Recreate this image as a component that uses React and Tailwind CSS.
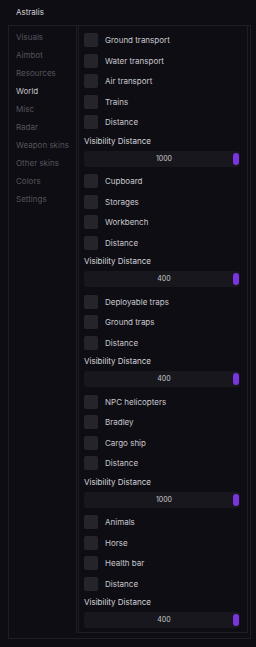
import React from "react";

const sections = [
  { items: ["Ground transport", "Water transport", "Air transport", "Trains", "Distance"], value: "1000" },
  { items: ["Cupboard", "Storages", "Workbench", "Distance"], value: "400" },
  { items: ["Deployable traps", "Ground traps", "Distance"], value: "400" },
  { items: ["NPC helicopters", "Bradley", "Cargo ship", "Distance"], value: "1000" },
  { items: ["Animals", "Horse", "Health bar", "Distance"], value: "400" },
];

const nav = ["Visuals", "Aimbot", "Resources", "World", "Misc", "Radar", "Weapon skins", "Other skins", "Colors", "Settings"];

function Check({ label, first, afterSlider }) {
  return (
    <div className={`flex items-center shrink-0 h-[14px] ${first ? (afterSlider ? "mt-[7.5px]" : "") : "mt-[6.5px]"}`}>
      <div className="w-[14px] h-[14px] rounded-[2px] bg-[#25242b]" />
      <span className="ml-[7px] text-[8px] leading-[10px] text-[#c9c8ce]">{label}</span>
    </div>
  );
}

export default function App() {
  return (
    <div className="w-[256px] h-[647px] bg-[#0e0d13] relative" style={{ fontFamily: "Inter, 'Noto Sans', sans-serif" }}>
      <div className="h-[25px] flex items-center pl-[16px] pb-[1px]">
        <span className="text-[8px] leading-[10px] text-[#d4d3d8]">Astralis</span>
      </div>
      <div className="mx-[8px] mr-[5px] h-[614px] border border-[#1f1e26] flex pr-[2px] pb-[5px]">
        <div className="w-[68px] border-r border-[#1f1e26] flex flex-col pt-[2px] pl-[7px]">
          {nav.map((n) => (
            <div key={n} className={`h-[18px] shrink-0 flex items-center text-[8px] leading-[10px] ${n === "World" ? "text-[#c4c3c8]" : "text-[#55545c]"}`}>
              {n}
            </div>
          ))}
        </div>
        <div className="ml-[1px] flex-1 border-l border-r border-b border-[#1f1e26] flex flex-col pt-[7px] pl-[5px] pr-[7px]">
          {sections.map((s, si) => (
            <React.Fragment key={si}>
              {s.items.map((it, ii) => (
                <Check key={ii} label={it} first={ii === 0} afterSlider={si > 0} />
              ))}
              <div className="mt-[6.5px] shrink-0 h-[10px] text-[8px] leading-[10px] text-[#d6d5da]">Visibility Distance</div>
              <div className="mt-[5px] shrink-0 h-[16px] rounded-[3px] bg-[#18171d] relative flex items-center justify-center">
                <span className="ml-[4px] text-[7px] leading-[10px] text-[#c9c8ce]">{s.value}</span>
                <div className="absolute right-[1px] top-[2px] w-[6px] h-[12px] rounded-[3px] bg-[#7b35e0]" />
              </div>
            </React.Fragment>
          ))}
        </div>
      </div>
    </div>
  );
}
